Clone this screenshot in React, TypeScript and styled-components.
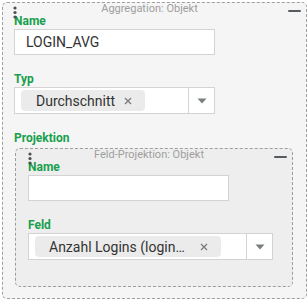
import React from "react";
import styled, { createGlobalStyle } from "styled-components";

const GlobalStyle = createGlobalStyle`
  html, body {
    margin: 0;
    padding: 0;
    background: #ffffff;
  }
  body {
    font-family: Roboto, "Liberation Sans", sans-serif;
  }
`;

const Panel = styled.div<{ $nested?: boolean }>`
  position: relative;
  border: 1px dashed #9e9e9e;
  border-radius: 5px;
  background: ${(p) => (p.$nested ? "#eeeeee" : "#f5f5f5")};
  margin: ${(p) => (p.$nested ? "2px 0 0 1px" : "2px 1px 0 2px")};
`;

const Header = styled.div`
  height: 11px;
  line-height: 11px;
  font-size: 11px;
  color: #9e9e9e;
  text-align: center;
  padding-right: 10px;
  white-space: nowrap;
`;

const Handle = styled.svg<{ $left: number }>`
  position: absolute;
  left: ${(p) => p.$left}px;
  top: 3px;
`;

const Minimize = styled.button`
  position: absolute;
  right: 5px;
  top: 7px;
  width: 13px;
  height: 2px;
  padding: 0;
  border: none;
  border-radius: 1px;
  background: #555b5e;
`;

const Body = styled.div<{ $nested?: boolean }>`
  padding: ${(p) => (p.$nested ? "0 13px 26px 12px" : "0 13px 11px 11px")};
`;

const Field = styled.div`
  margin-bottom: 17px;
  &:last-child {
    margin-bottom: 0;
  }
`;

const Label = styled.label`
  display: block;
  font-size: 12px;
  font-weight: 700;
  line-height: 15px;
  color: #17a04c;
`;

const TextInput = styled.input`
  display: block;
  box-sizing: border-box;
  width: 201px;
  height: 26px;
  margin: 0;
  padding: 0 11px;
  border: 1px solid #d3d3d3;
  background: #ffffff;
  font-family: Roboto, "Liberation Sans", sans-serif;
  font-size: 14px;
  color: #333333;
  outline: none;
`;

const Select = styled.div`
  display: flex;
  box-sizing: border-box;
  width: fit-content;
  min-width: 201px;
  height: 27px;
  border: 1px solid #d3d3d3;
  background: #ffffff;
`;

const ChipArea = styled.div`
  flex: 1;
  display: flex;
  align-items: center;
  padding: 0 25px 0 6px;
`;

const Chip = styled.div<{ $padLeft: number }>`
  display: flex;
  align-items: center;
  height: 21px;
  padding: 0 13px 0 ${(p) => p.$padLeft}px;
  border-radius: 4px;
  background: #ebebeb;
  font-size: 14px;
  color: #333333;
  white-space: nowrap;
`;

const ChipText = styled.span<{ $max?: number }>`
  max-width: ${(p) => (p.$max ? `${p.$max}px` : "none")};
  overflow: hidden;
  text-overflow: ellipsis;
`;

const ChipRemove = styled.svg`
  margin-left: 9px;
  flex-shrink: 0;
`;

const ArrowBox = styled.div`
  width: 25px;
  border-left: 1px solid #d3d3d3;
  display: flex;
  align-items: center;
  justify-content: center;
`;

function Dots({ left }: { left: number }) {
  return (
    <Handle $left={left} width="4" height="13" viewBox="0 0 4 13">
      <circle cx="2" cy="2" r="1.6" fill="#4a4f52" />
      <circle cx="2" cy="6.5" r="1.6" fill="#4a4f52" />
      <circle cx="2" cy="11" r="1.6" fill="#4a4f52" />
    </Handle>
  );
}

function ChipSelect({ value, max }: { value: string; max?: number }) {
  return (
    <Select>
      <ChipArea>
        <Chip $padLeft={max ? 14 : 15}>
          <ChipText $max={max}>{value}</ChipText>
          <ChipRemove width="8" height="8" viewBox="0 0 8 8">
            <path d="M1 1L7 7M7 1L1 7" stroke="#7b7b7b" strokeWidth="1.3" />
          </ChipRemove>
        </Chip>
      </ChipArea>
      <ArrowBox>
        <svg width="10" height="6" viewBox="0 0 10 6">
          <path d="M0.5 0.5H9.5L5 5.5Z" fill="#7a7f82" />
        </svg>
      </ArrowBox>
    </Select>
  );
}

export default function App() {
  return (
    <>
      <GlobalStyle />
      <Panel>
        <Dots left={10} />
        <Header>Aggregation: Objekt</Header>
        <Minimize aria-label="minimieren" />
        <Body>
          <Field>
            <Label>Name</Label>
            <TextInput defaultValue="LOGIN_AVG" />
          </Field>
          <Field>
            <Label>Typ</Label>
            <ChipSelect value="Durchschnitt" />
          </Field>
          <Field>
            <Label>Projektion</Label>
            <Panel $nested>
              <Dots left={12} />
              <Header>Feld-Projektion: Objekt</Header>
              <Minimize aria-label="minimieren" />
              <Body $nested>
                <Field>
                  <Label>Name</Label>
                  <TextInput defaultValue="" />
                </Field>
                <Field>
                  <Label>Feld</Label>
                  <ChipSelect value="Anzahl Logins (login_count)" max={142} />
                </Field>
              </Body>
            </Panel>
          </Field>
        </Body>
      </Panel>
    </>
  );
}
